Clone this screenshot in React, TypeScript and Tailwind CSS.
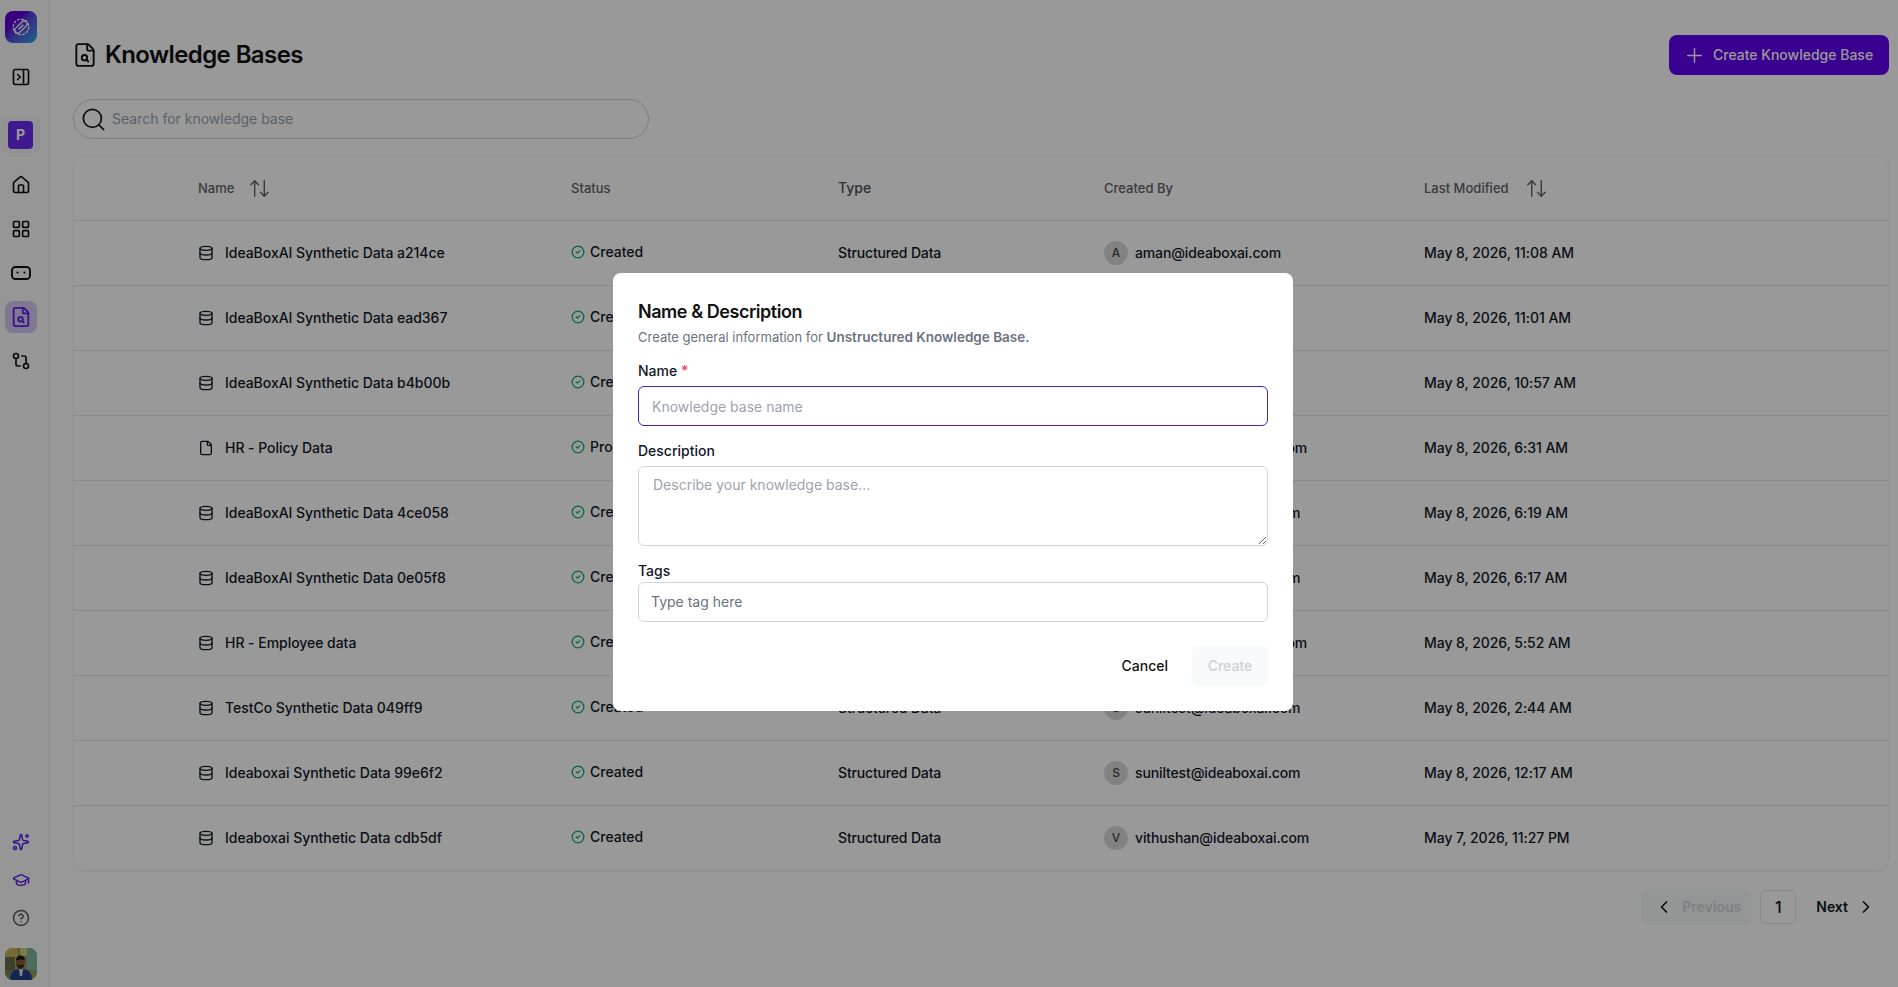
import React from "react";
import {
  ArrowUpDown,
  ChevronLeft,
  ChevronRight,
  CircleCheck,
  CircleHelp,
  Database,
  File,
  FileSearch,
  GitCompare,
  GraduationCap,
  House,
  LayoutGrid,
  PanelRightClose,
  Plus,
  Search,
  Sparkles,
} from "lucide-react";

type Row = {
  name: string;
  file?: boolean;
  status: string;
  type: string;
  initial: string;
  email: string;
  date: string;
};

const rows: Row[] = [
  { name: "IdeaBoxAI Synthetic Data a214ce", status: "Created", type: "Structured Data", initial: "A", email: "aman@ideaboxai.com", date: "May 8, 2026, 11:08 AM" },
  { name: "IdeaBoxAI Synthetic Data ead367", status: "Created", type: "Structured Data", initial: "A", email: "aman@ideaboxai.com", date: "May 8, 2026, 11:01 AM" },
  { name: "IdeaBoxAI Synthetic Data b4b00b", status: "Created", type: "Structured Data", initial: "A", email: "aman@ideaboxai.com", date: "May 8, 2026, 10:57 AM" },
  { name: "HR - Policy Data", file: true, status: "Processed", type: "Unstructured Data", initial: "H", email: "hariharan@ideaboxai.com", date: "May 8, 2026, 6:31 AM" },
  { name: "IdeaBoxAI Synthetic Data 4ce058", status: "Created", type: "Structured Data", initial: "S", email: "suniltest@ideaboxai.com", date: "May 8, 2026, 6:19 AM" },
  { name: "IdeaBoxAI Synthetic Data 0e05f8", status: "Created", type: "Structured Data", initial: "S", email: "suniltest@ideaboxai.com", date: "May 8, 2026, 6:17 AM" },
  { name: "HR - Employee data", status: "Created", type: "Structured Data", initial: "H", email: "hariharan@ideaboxai.com", date: "May 8, 2026, 5:52 AM" },
  { name: "TestCo Synthetic Data 049ff9", status: "Created", type: "Structured Data", initial: "S", email: "suniltest@ideaboxai.com", date: "May 8, 2026, 2:44 AM" },
  { name: "Ideaboxai Synthetic Data 99e6f2", status: "Created", type: "Structured Data", initial: "S", email: "suniltest@ideaboxai.com", date: "May 8, 2026, 12:17 AM" },
  { name: "Ideaboxai Synthetic Data cdb5df", status: "Created", type: "Structured Data", initial: "V", email: "vithushan@ideaboxai.com", date: "May 7, 2026, 11:27 PM" },
];

function Logo() {
  return (
    <div className="flex h-8 w-8 items-center justify-center rounded-lg bg-gradient-to-br from-[#5a00d8] from-35% to-[#00a8e0]">
      <svg viewBox="0 0 24 24" width="22" height="22" fill="none" stroke="#ffffff" strokeWidth="1.4">
        <circle cx="12" cy="12" r="8.5" strokeDasharray="3.2 1.2" />
        <path d="M6 13.5 13.500 6a3.200 3.200 0 0 1 4.500 4.500L10.500 18A3.200 3.200 0 0 1 6 13.500Z" />
        <path d="M9.500 14.500 14.500 9.500" />
      </svg>
    </div>
  );
}

function BotIcon() {
  return (
    <svg viewBox="0 0 20 14" width="20" height="14" fill="none" stroke="#111111" strokeWidth="1.9">
      <rect x="1" y="1" width="18" height="12" rx="3.500" />
      <circle cx="6.500" cy="6.600" r="1.100" fill="#111111" stroke="none" />
      <circle cx="13.500" cy="6.600" r="1.100" fill="#111111" stroke="none" />
    </svg>
  );
}

function AvatarPhoto() {
  return (
    <svg viewBox="0 0 32 32" width="32" height="32" className="rounded-lg">
      <rect width="32" height="32" fill="#8f9a58" />
      <rect x="0" y="0" width="13" height="14" fill="#c4b05a" />
      <rect x="0" y="9" width="10" height="14" fill="#6a6b48" />
      <rect x="22" y="0" width="10" height="22" fill="#7fb59a" />
      <rect x="15" y="0" width="7" height="8" fill="#d0cc82" />
      <rect x="0" y="22" width="8" height="10" fill="#77805a" />
      <path d="M5 32c0-8 4-11 11-11s11 3 11 11Z" fill="#1f4088" />
      <path d="M14 21h4l-1 7h-2Z" fill="#dde3e8" />
      <ellipse cx="15.500" cy="15" rx="4.500" ry="5.500" fill="#8a5a3c" />
      <path d="M11 13c0-4 2-5.500 4.500-5.500S20 9 20 13c-1.500-2-7-2-9 0Z" fill="#1c1712" />
      <path d="M11.500 16c1 4 2.500 5 4 5s3-1 4-5c-1 1.500-7 1.500-8 0Z" fill="#3a281c" />
    </svg>
  );
}

function NavSlot({ children, active }: { children: React.ReactNode; active?: boolean }) {
  return (
    <div className={active ? "flex h-8 w-8 items-center justify-center rounded-lg bg-[#d6c9f6]" : "flex h-8 w-8 items-center justify-center"}>
      {children}
    </div>
  );
}

function Sidebar() {
  return (
    <aside className="flex h-full w-[50px] shrink-0 flex-col items-center border-r border-[#e5e7eb] bg-[#fbfbfb] pr-[8px]">
      <div className="mt-[11px]"><Logo /></div>
      <div className="mt-[18px]"><NavSlot><PanelRightClose size={20} color="#111111" /></NavSlot></div>
      <div className="mt-6 flex h-9 w-[39px] items-center justify-center rounded-md bg-[#f3f3f3]">
        <div className="flex h-7 w-[25px] items-center justify-center rounded bg-[#6a2af0] text-sm font-bold text-white">P</div>
      </div>
      <div className="mt-4 flex flex-col gap-3">
        <NavSlot><House size={20} color="#111111" /></NavSlot>
        <NavSlot><LayoutGrid size={20} color="#111111" /></NavSlot>
        <NavSlot><BotIcon /></NavSlot>
        <NavSlot active><FileSearch size={22} color="#5a22e6" /></NavSlot>
        <NavSlot><GitCompare size={20} color="#111111" /></NavSlot>
      </div>
      <div className="mt-auto flex flex-col items-center gap-[6px]">
        <NavSlot><Sparkles size={18} color="#5a22e6" /></NavSlot>
        <NavSlot><GraduationCap size={18} color="#5a22e6" /></NavSlot>
        <NavSlot><CircleHelp size={18} color="#555555" /></NavSlot>
      </div>
      <div className="mb-[7px] mt-[14px] h-8 w-8"><AvatarPhoto /></div>
    </aside>
  );
}

function Table() {
  return (
    <div className="overflow-hidden rounded-xl border border-[#f1f2f3] shadow-xs">
      <div className="grid h-[65px] grid-cols-[497px_267px_266px_320px_1fr] items-center border-b border-[#e5e7eb] text-[13px] font-medium text-[#5f6368]">
        <div className="flex items-center pl-[124px] pt-px">
          Name
          <ArrowUpDown size={23} className="ml-[14px]" strokeWidth={1.5} />
        </div>
        <div className="pt-px">Status</div>
        <div className="text-sm text-[#4b5057]">Type</div>
        <div className="pt-px">Created By</div>
        <div className="flex items-center pt-px">
          Last Modified
          <ArrowUpDown size={23} className="ml-4" strokeWidth={1.5} />
        </div>
      </div>
      {rows.map((r, i) => (
        <div
          key={r.name}
          className={
            i === rows.length - 1
              ? "grid h-16 grid-cols-[497px_267px_266px_320px_1fr] items-center text-sm font-medium text-[#111827]"
              : "grid h-[65px] grid-cols-[497px_267px_266px_320px_1fr] items-center border-b border-[#e5e7eb] text-sm font-medium text-[#111827]"
          }
        >
          <div className="flex items-center gap-[11px] pl-[124px] tracking-[-0.04px]">
            {r.file ? <File size={16} /> : <Database size={16} />}
            {r.name}
          </div>
          <div className="flex -translate-y-px items-center gap-[5px]">
            <CircleCheck size={14} color="#12a76c" strokeWidth={2.2} />
            {r.status}
          </div>
          <div className="tracking-[-0.16px]">{r.type}</div>
          <div className="flex items-center gap-[7px] tracking-[-0.13px]">
            <span className="flex h-6 w-6 items-center justify-center rounded-full bg-[#d9d9d9] text-xs text-[#444444]">{r.initial}</span>
            {r.email}
          </div>
          <div className="tracking-[-0.06px]">{r.date}</div>
        </div>
      ))}
    </div>
  );
}

function Pagination() {
  return (
    <div className="mt-[18px] flex items-center justify-end pr-[13px]">
      <div className="flex h-9 w-[109px] items-center gap-[8px] rounded-md bg-[#f7f8f9] pl-3 text-sm font-semibold text-[#d4d7da]">
        <ChevronLeft size={20} color="#111111" />
        Previous
      </div>
      <div className="ml-[9px] flex h-[34px] w-9 items-center justify-center rounded-md border border-[#e5e7eb] text-base font-medium text-[#111827]">1</div>
      <div className="ml-5 flex items-center gap-2 text-sm font-semibold text-[#111827]">
        Next
        <ChevronRight size={20} color="#111111" />
      </div>
    </div>
  );
}

function Dialog() {
  return (
    <div className="absolute inset-0 flex items-center justify-center bg-black/40 pb-[3px] pl-2">
      <div className="flex h-[438px] w-[680px] flex-col rounded-lg bg-white px-[25px] pt-[27px] text-sm text-[#111827]">
        <h2 className="text-lg font-semibold leading-6 tracking-tight text-[#111111]">Name &amp; Description</h2>
        <p className="mt-[1px] text-[13px] leading-6 text-[#6b7280]">
          Create general information for <span className="text-[13.5px] font-semibold">Unstructured Knowledge Base.</span>
        </p>
        <label className="mt-[12px] font-medium leading-5">
          Name <span className="text-[#f43f5e]">*</span>
        </label>
        <input
          placeholder="Knowledge base name"
          className="mt-[5px] h-10 w-full rounded-md border-[1.5px] border-[#4a21c4] px-[13px] outline-none placeholder:text-[#9ca3af]"
        />
        <label className="mt-[15px] font-medium leading-5">Description</label>
        <textarea
          placeholder="Describe your knowledge base..."
          className="mt-[5px] h-20 w-full rounded-md border border-[#d1d5db] px-[14px] py-[8px] outline-none placeholder:text-[#9ca3af]"
        />
        <label className="mt-[15px] font-medium leading-5">Tags</label>
        <input
          placeholder="Type tag here"
          className="mt-[1px] h-10 w-full rounded-md border border-[#d1d5db] px-[12px] pb-[2px] outline-none placeholder:text-[#6b7280]"
        />
        <div className="mt-6 flex items-center justify-end gap-[24px]">
          <button className="font-medium text-[#111111]">Cancel</button>
          <button className="h-10 w-[76px] rounded-md bg-[#f8f9fa] font-medium text-[#cdd1d6]">Create</button>
        </div>
      </div>
    </div>
  );
}

export default function App() {
  return (
    <div className="relative flex h-screen w-full overflow-hidden bg-white font-['Inter',sans-serif]">
      <Sidebar />
      <main className="min-w-0 flex-1 pl-[23px] pr-[9px]">
        <header className="flex h-[75px] items-end justify-between">
          <div className="flex h-10 items-center gap-[7px]">
            <FileSearch size={26} color="#111111" strokeWidth={1.75} className="-ml-px" />
            <h1 className="text-2xl font-semibold tracking-tight text-[#111111]">Knowledge Bases</h1>
          </div>
          <button className="flex h-10 w-[220px] items-center gap-[7px] rounded-lg bg-[#6100f0] pl-[14px] text-sm font-medium text-white">
            <Plus size={23} strokeWidth={1.5} />
            Create Knowledge Base
          </button>
        </header>
        <div className="mb-4 mt-6 flex h-10 w-[576px] items-center gap-[5px] rounded-full border border-[#d1d5db] pl-[6px]">
          <Search size={27} color="#111111" strokeWidth={1.5} />
          <span className="text-sm text-[#9ca3af]">Search for knowledge base</span>
        </div>
        <Table />
        <Pagination />
      </main>
      <Dialog />
    </div>
  );
}
